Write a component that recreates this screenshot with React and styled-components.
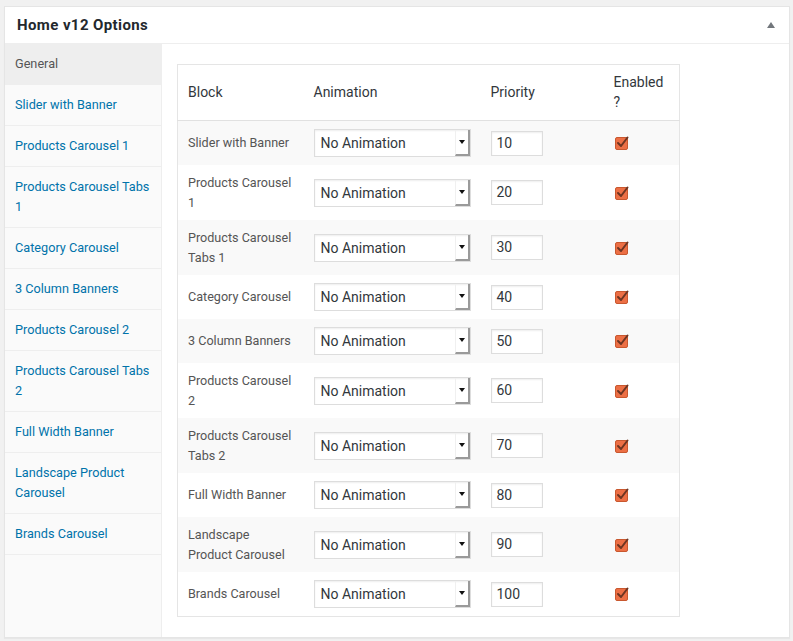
import React from "react";
import styled, { createGlobalStyle } from "styled-components";

const GlobalStyle = createGlobalStyle`
  html, body {
    margin: 0;
    padding: 0;
    background: #f1f1f1;
  }
  body {
    padding: 6px 3px 3px 4px;
    font-family: Roboto, "Liberation Sans", sans-serif;
  }
`;

const Panel = styled.div`
  width: 784px;
  background: white;
  border: 1px solid #e5e5e5;
  box-shadow: 0 1px 1px rgba(0, 0, 0, 0.04);
`;

const PanelHeader = styled.div`
  display: flex;
  align-items: center;
  justify-content: space-between;
  height: 36px;
  padding: 0 14px 0 12px;
  border-bottom: 1px solid #eee;
`;

const Title = styled.h2`
  margin: 0;
  font-size: 15px;
  font-weight: 700;
  letter-spacing: 0.4px;
  color: #23282d;
`;

const Toggle = styled.span`
  width: 0;
  height: 0;
  border-left: 4px solid transparent;
  border-right: 4px solid transparent;
  border-bottom: 6px solid #72777c;
`;

const Body = styled.div`
  display: flex;
  min-height: 593px;
`;

const Sidebar = styled.ul`
  list-style: none;
  margin: 0;
  padding: 0;
  width: 156px;
  flex-shrink: 0;
  background: #fafafa;
  border-right: 1px solid #eee;
`;

const SideItem = styled.li`
  padding: 10px 6px 10px 10px;
  font-size: 12.7px;
  line-height: 20px;
  color: ${(p) => (p.$active ? "#555" : "#0073aa")};
  background: ${(p) => (p.$active ? "#eee" : "transparent")};
  border-bottom: 1px solid #eee;
`;

const Main = styled.div`
  flex: 1;
  padding: 20px 15px 20px 15px;
`;

const Table = styled.table`
  width: 502px;
  border-collapse: collapse;
  border: 1px solid #e5e5e5;
  table-layout: fixed;
`;

const Th = styled.th`
  text-align: left;
  font-weight: 400;
  font-size: 14px;
  line-height: 19.6px;
  color: #32373c;
  padding: 8px 10px;
  vertical-align: middle;
  border-bottom: 1px solid #e1e1e1;
`;

const Tr = styled.tr`
  background: ${(p) => (p.$alt ? "#f9f9f9" : "white")};
`;

const Td = styled.td`
  font-size: 12.6px;
  line-height: 19.5px;
  color: #555;
  padding: 8px 10px;
  vertical-align: middle;
`;

const SelectBox = styled.div`
  display: flex;
  align-items: stretch;
  width: 157px;
  height: 28px;
  box-sizing: border-box;
  border: 1px solid #ddd;
  background: white;
  box-shadow: inset 0 1px 2px rgba(0, 0, 0, 0.07);
`;

const SelectLabel = styled.span`
  flex: 1;
  padding-left: 6px;
  font-size: 14px;
  line-height: 26px;
  color: #32373c;
`;

const SelectArrow = styled.span`
  display: flex;
  align-items: center;
  justify-content: center;
  width: 12px;
  border-left: 1px solid #f0f0f0;
  border-right: 2px solid #9a9a9a;
  border-bottom: 2px solid #9a9a9a;

  &::after {
    content: "";
    border-left: 3px solid transparent;
    border-right: 3px solid transparent;
    border-top: 4px solid #111;
  }
`;

const NumberInput = styled.div`
  width: 52px;
  height: 25px;
  box-sizing: border-box;
  border: 1px solid #ddd;
  padding-left: 5px;
  font-size: 14px;
  line-height: 23px;
  color: #32373c;
  background: white;
  box-shadow: inset 0 1px 2px rgba(0, 0, 0, 0.07);
`;

const CheckWrap = styled.span`
  display: flex;
  align-items: center;
  padding-left: 1px;

  svg {
    display: block;
  }
`;

const Checked = () => (
  <CheckWrap>
    <svg width="15" height="14" viewBox="0 0 15 14">
      <rect x="0.5" y="1.5" width="12" height="12" rx="1.5" fill="#ec6f45" stroke="#c8582f" />
      <path d="M3 7 L6 10 L12.5 1.5" fill="none" stroke="#6d3522" strokeWidth="2" strokeLinecap="round" strokeLinejoin="round" />
    </svg>
  </CheckWrap>
);

const blocks = [
  "Slider with Banner",
  "Products Carousel 1",
  "Products Carousel Tabs 1",
  "Category Carousel",
  "3 Column Banners",
  "Products Carousel 2",
  "Products Carousel Tabs 2",
  "Full Width Banner",
  "Landscape Product Carousel",
  "Brands Carousel",
];

const App = () => {
  return (
    <>
      <GlobalStyle />
      <Panel>
        <PanelHeader>
          <Title>Home v12 Options</Title>
          <Toggle />
        </PanelHeader>
        <Body>
          <Sidebar>
            <SideItem $active>General</SideItem>
            {blocks.map((b) => (
              <SideItem key={b}>{b}</SideItem>
            ))}
          </Sidebar>
          <Main>
            <Table>
              <colgroup>
                <col style={{ width: 126 }} />
                <col style={{ width: 177 }} />
                <col style={{ width: 123 }} />
                <col style={{ width: 76 }} />
              </colgroup>
              <thead>
                <tr>
                  <Th>Block</Th>
                  <Th>Animation</Th>
                  <Th>Priority</Th>
                  <Th>Enabled ?</Th>
                </tr>
              </thead>
              <tbody>
                {blocks.map((b, i) => (
                  <Tr key={b} $alt={i % 2 === 0}>
                    <Td>{b}</Td>
                    <Td>
                      <SelectBox>
                        <SelectLabel>No Animation</SelectLabel>
                        <SelectArrow />
                      </SelectBox>
                    </Td>
                    <Td>
                      <NumberInput>{(i + 1) * 10}</NumberInput>
                    </Td>
                    <Td>
                      <Checked />
                    </Td>
                  </Tr>
                ))}
              </tbody>
            </Table>
          </Main>
        </Body>
      </Panel>
    </>
  );
};

export default App;
